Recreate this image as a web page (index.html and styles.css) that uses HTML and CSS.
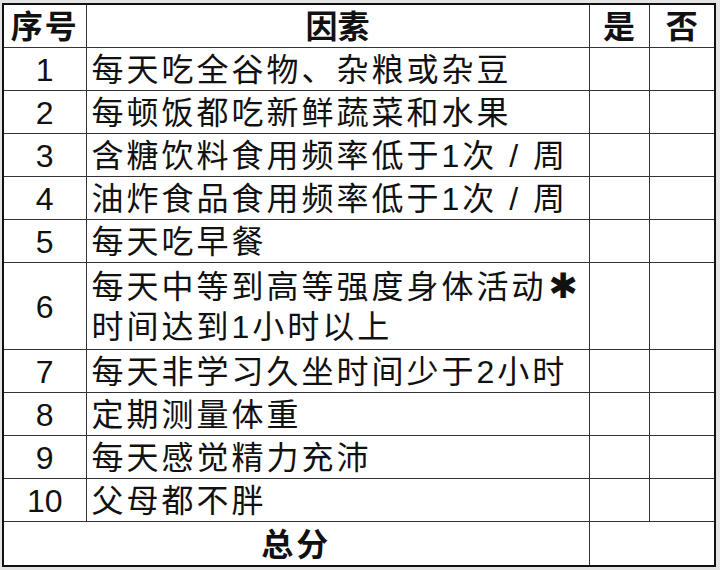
FILE: index.html
```html
<!DOCTYPE html>
<html lang="zh">
<head>
<meta charset="utf-8">
<link rel="stylesheet" href="styles.css">
</head>
<body>
<table class="sheet">
  <colgroup>
    <col class="c-no"><col class="c-factor"><col class="c-yes"><col class="c-no2">
  </colgroup>
  <thead>
    <tr class="row head">
      <th>序号</th><th>因素</th><th>是</th><th>否</th>
    </tr>
  </thead>
  <tbody>
    <tr class="row"><td class="num">1</td><td class="txt">每天吃全谷物、杂粮或杂豆</td><td></td><td></td></tr>
    <tr class="row"><td class="num">2</td><td class="txt">每顿饭都吃新鲜蔬菜和水果</td><td></td><td></td></tr>
    <tr class="row"><td class="num">3</td><td class="txt">含糖饮料食用频率低于1次 / 周</td><td></td><td></td></tr>
    <tr class="row"><td class="num">4</td><td class="txt">油炸食品食用频率低于1次 / 周</td><td></td><td></td></tr>
    <tr class="row"><td class="num">5</td><td class="txt">每天吃早餐</td><td></td><td></td></tr>
    <tr class="row tall"><td class="num">6</td><td class="txt">每天中等到高等强度身体活动<span class="star">✱</span><br>时间达到1小时以上</td><td></td><td></td></tr>
    <tr class="row"><td class="num">7</td><td class="txt">每天非学习久坐时间少于2小时</td><td></td><td></td></tr>
    <tr class="row"><td class="num">8</td><td class="txt">定期测量体重</td><td></td><td></td></tr>
    <tr class="row"><td class="num">9</td><td class="txt">每天感觉精力充沛</td><td></td><td></td></tr>
    <tr class="row"><td class="num">10</td><td class="txt">父母都不胖</td><td></td><td></td></tr>
    <tr class="row total"><th colspan="2">总分</th><td colspan="2"></td></tr>
  </tbody>
</table>
</body>
</html>
```
FILE: styles.css
```css
html, body {
  margin: 0;
  padding: 0;
  background: #e4e4e4;
}
body {
  padding: 3px 0 0 2px;
  width: 720px;
  height: 570px;
  box-sizing: border-box;
  overflow: hidden;
}
.sheet {
  border-collapse: collapse;
  table-layout: fixed;
  width: 712px;
  background: #fff;
  border: 2px solid #111;
  font-family: "Liberation Sans", "Noto Sans CJK SC", sans-serif;
  font-size: 32px;
  color: #111;
}
.c-no { width: 83px; }
.c-factor { width: 503px; }
.c-yes { width: 60px; }
.c-no2 { width: 66px; }
.sheet th, .sheet td {
  border: 1px solid #333;
  padding: 2px 0 0 0;
  line-height: 40px;
  height: 40px;
  vertical-align: middle;
}
.sheet th {
  font-weight: bold;
  text-align: center;
}
.head th:first-child {
  letter-spacing: 2px;
}
.num {
  text-align: center;
}
.txt {
  text-align: left;
  padding-left: 5px !important;
  letter-spacing: 3px;
  white-space: nowrap;
}
.star {
  font-family: "DejaVu Sans", sans-serif;
  font-size: 35px;
  line-height: 30px;
  margin-left: 2px;
}
.tall td {
  height: 84px;
}
.total th {
  letter-spacing: 3px;
}
.total th, .total td {
  height: 41px;
}
```
